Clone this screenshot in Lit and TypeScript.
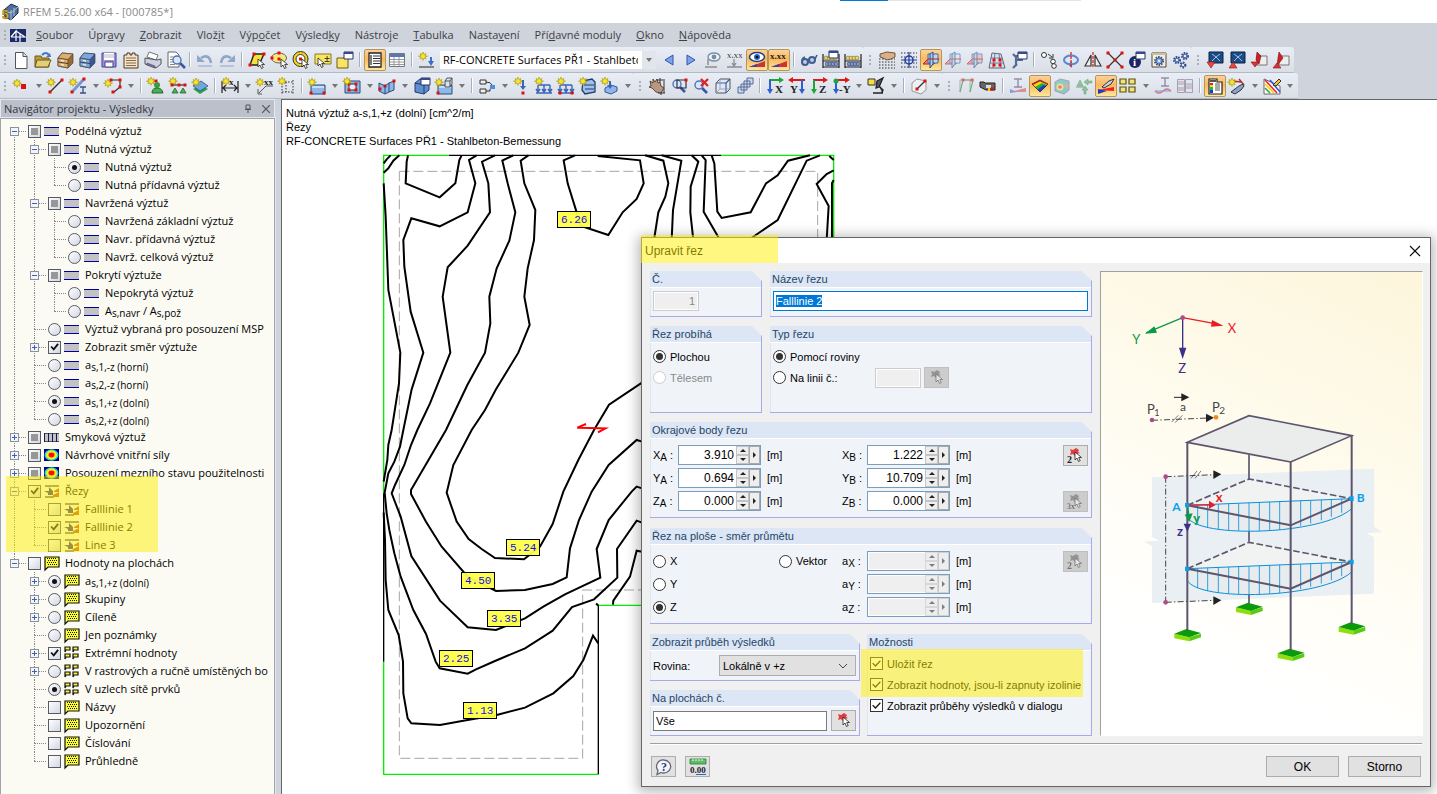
import { LitElement, html, svg, css, nothing } from "lit";
import { customElement, query } from "lit/decorators.js";
import { classMap } from "lit/directives/class-map.js";

/* ---------- drawing helpers ---------- */
const p = (d: string, fill = "none", stroke = "none", w = 1) =>
  svg`<path d=${d} fill=${fill} stroke=${stroke} stroke-width=${w}></path>`;
const star = (x = 4, y = 4) =>
  p(`M${x} ${y - 4}l1 2.500 2-1-1 2 2.500 .7-2.500 .7 1 2-2-1-1 2.500-1-2.500-2 1 1-2-2.500-.7 2.500-.7-1-2 2 1z`, "#f5e636", "#a89200", 0.6);
const dots = (...pts: number[][]) => pts.map(([x, y]) => p(`M${x - 1.5} ${y - 1.5}h3v3h-3z`, "#e01010"));
const cursor = (x: number, y: number) =>
  p(`M${x} ${y}v8l2-2 1.500 3.500 1.700-.8-1.500-3.200h2.800z`, "#fff", "#222", 0.8);
const glass = (x: number, y: number) => svg`
  ${p(`M${x + 3} ${y + 3}l5 5`, "none", "#3a57a8", 2.6)}
  <circle cx=${x} cy=${y} r="4" fill="#d8e8fb" stroke="#5473b8" stroke-width="1.4"></circle>`;
const glyph = (x: number, y: number, size: number, t: string, fill = "#222") =>
  svg`<text x=${x} y=${y} font-size=${size} fill=${fill} font-family="Liberation Serif, serif" font-weight="bold">${t}</text>`;
const axis = (t: string, h: string, v: string, flip = false) => svg`
  ${p(flip ? "M4 3h13" : "M3 3h12", "none", h, 2)}
  ${p(flip ? "M0 3l5-3v6z" : "M18 3l-5-3v6z", h)}
  ${p(flip ? "M14 3v10" : "M4 3v10", "none", v, 2)}
  ${p(flip ? "M14 17l-3-5h6z" : "M4 17l-3-5h6z", v)}
  ${glyph(flip ? 2 : t.length > 1 ? 7 : 9, 16, 11, t)}`;
const cabinet = (a: string, b: string) => svg`
  ${p("M2 7l4-5 11 1v9l-5 5-10-2z", b, "#444", 0.7)}${p("M2 7l10 1.500v8.500l-10-2z", a, "#444", 0.7)}
  ${p("M2 7l4-5 11 1-5 5.500z", a, "#444", 0.7)}${p("M2 11l10 1.500", "none", "#222", 0.8)}${p("M5 9.500l3 .6M5 13.500l3 .6", "none", "#fff6d0", 1.200)}`;
const planes = (a: string) => svg`
  ${p("M1 13l5-5h11l-5 5z", "#e98080", "#b02020", 1)}${p("M6 3h10v9h-10z", a, "#3a6ea5", 1)}
  ${p("M8 3l3-2v12l-3 4z", "#a9cdf0", "#2b4f86", 1)}${p("M6 8h10", "none", "#b02020", 1)}`;
const slab = svg`${p("M3 8h14v9h-14z", "#8db8ea", "#2c4a78")}${p("M4 9h12v2h-12z", "#c6defa")}`;
const loads = p("M1 16h16M3 8v7M9 8v7M15 8v7M3 8h12M3 12h0M1 12l2 3 2-3M7 12l2 3 2-3M13 12l2 3 2-3", "none", "#3b66b8", 1.4);
const win = (x: number, y: number) => svg`${p(`M${x} ${y}h9v7h-9z`, "#fff", "#2a3560")}${p(`M${x} ${y}h9v2h-9z`, "#39498c")}`;
const cube = (a: string, b: string) => svg`${p("M2 6l4-4h10v10l-4 4H2z", a, "#555")}${p("M2 6h10v10M12 6l4-4", "none", b, 1.2)}${p("M6 2v10h10M6 12l-4 4", "none", "#8b97b4", 0.8)}`;
const abacus = svg`${p("M1 3v14M17 3v14M1 10h16M1 16h16", "none", "#222", 1.2)}
  ${[4, 7, 10, 13].map((x) => svg`<circle cx=${x} cy="7" r="1.900" fill="#e5d67a" stroke="#6a5a10" stroke-width=".5"></circle><circle cx=${x + 1} cy="13" r="1.900" fill="#7f9ae0" stroke="#223" stroke-width=".5"></circle>`)}`;
const gear = (x: number, y: number, r: number) => svg`<circle cx=${x} cy=${y} r=${r} fill="#b9cdf0" stroke="#33508f" stroke-width="2" stroke-dasharray="1.500 1"></circle><circle cx=${x} cy=${y} r=${r - 1} fill="#8fabdf" stroke="#33508f" stroke-width=".8"></circle><circle cx=${x} cy=${y} r="1" fill="#fff"></circle>`;
const dash = (d: string) => svg`<path d=${d} fill="none" stroke="#333" stroke-dasharray="1.500 1.500"></path>`;
const picker = svg`${p("M3 2l3 1 3-2 3 2-1 2 2 1-3 1-2 2-2-2-3 1 1-3z", "#e23b3b")}${cursor(8, 5)}`;
const rainbow = svg`${p("M1 7l8-4 8 4-8 8z", "#e22")}${p("M2 8l7-3.500 7 3-7 7.500z", "#f6d90a")}${p("M4 10l7-4 5 2-7 7z", "#1fb436")}${p("M6.500 12.500l6-4.500 3 1-6.500 6z", "#2038d8")}${p("M1 7l8-4 8 4-8 8z", "none", "#222", 0.7)}`;
const quad = svg`${[[0, 2], [8, 2], [0, 9], [8, 9]].map(([x, y]) => p(`M${x + 1} ${y}h5v3h-4l-1 2z`, "#f7f03a", "#111", 1.2))}`;

const icons: Record<string, unknown> = {
  new: svg`${p("M3.500 1.500h8l3.500 4v12h-11.500z", "#fff", "#555")}${p("M11 1.500v4h4", "#dde", "#555")}`,
  open: svg`${p("M1 5h6l1 2h7v9H1z", "#b79b3c", "#6f5a12")}${p("M3 9h14l-3 7H1z", "#e2cf78", "#6f5a12")}${p("M8 4q4-4 7 0", "none", "#4a77c4", 2)}${p("M17 6h-5l4-4z", "#4a77c4")}`,
  box: cabinet("#e0ae6c", "#9c6a30"),
  boxBlue: cabinet("#7ea6e4", "#33599e"),
  save: svg`${p("M2 2h14v14h-14z", "#9a8fd8", "#4b4390")}${p("M4 2h10v7H4z", "#fff")}${p("M4 4h10M4 6h10", "none", "#bbb")}${p("M5 11h8v5H5z", "#fff", "#4b4390")}`,
  notes: svg`${p("M2 4h3v-2h3v2h2v-2h3v2h3v13H2z", "#f5e2c8", "#4a3a28")}${p("M4 7h10M4 9.500h10M4 12h10M4 14.500h10", "none", "#8a6b48")}`,
  print: svg`${p("M5 1l9 3-2 5-9-3z", "#fff", "#777")}${p("M1 7l12 2 4-1v5l-5 4-11-4z", "#cfd0e4", "#555")}${p("M3 12l8 3v2l-8-3z", "#77a", "#445", 0.6)}`,
  preview: svg`${p("M2 1h8l3 3v12H2z", "#fff", "#666")}${p("M4 6h6M4 8.500h5M4 11h5M4 13.500h5", "none", "#888")}${glass(11, 9)}`,
  undo: svg`${p("M5 7q8-5 10 5", "none", "#8ea6c9", 2.600)}${p("M1 4v7h8z", "#8ea6c9")}${p("M2 15h14", "none", "#b6c3d8", 2)}`,
  redo: svg`${p("M13 7q-8-5-10 5", "none", "#8ea6c9", 2.600)}${p("M17 4v7h-8z", "#8ea6c9")}${p("M2 15h14", "none", "#b6c3d8", 2)}`,
  selPara: svg`${p("M2 14l4-11h10l-5 11z", "#f6e13a", "#222", 1.4)}${dots([2, 14], [6, 3], [16, 3])}${cursor(10, 8)}`,
  selEllipse: svg`<ellipse cx="9" cy="7" rx="7.500" ry="5" fill="#f6e97a" stroke="#666"></ellipse>${dots([9, 2], [2, 7], [9, 8])}${cursor(11, 8)}`,
  selRing: svg`<circle cx="8.500" cy="8" r="6" fill="#fff" stroke="#f1d51c" stroke-width="3"></circle><circle cx="8.500" cy="8" r="7.500" fill="none" stroke="#333"></circle><circle cx="8.500" cy="8" r="4.500" fill="none" stroke="#333"></circle>${dots([8.5, 8])}${cursor(10, 8)}`,
  selAdd: svg`${p("M1 3h16v10H1z", "#f8e566", "#8a7a1a")}${cursor(4, 7)}${glyph(10, 11, 11, "±")}`,
  selWin: svg`${p("M1 7h11v10H1z", "#f8e566", "#6f5a12")}${win(8, 1)}`,
  list: svg`${p("M3 2h12v14H3z", "#fff", "#222", 1.300)}${p("M7 5h7M7 7.500h7M7 10h7M7 12.500h7", "none", "#333")}${p("M5 4v10", "none", "#333", 1.300)}`,
  table: svg`${p("M1.500 2.500h15v13h-15z", "#fff", "#777")}${p("M2 3h14v3H2z", "#5a78b8")}${p("M2 8.500h14M2 11h14M2 13.500h14M6 6v9M11 6v9", "none", "#999")}`,
  load: svg`${star(5, 5)}${p("M13 6v6", "none", "#3b70c8", 2)}${p("M1 16h15", "none", "#444", 1.2)}${p("M13 15l-3-5h6z", "#3b70c8")}`,
  prev: p("M13 4v10l-8-5z", "#7fa2ec", "#2e57b0"),
  next: p("M5 4v10l8-5z", "#7fa2ec", "#2e57b0"),
  supportEye: svg`<ellipse cx="10" cy="6" rx="6" ry="4" fill="#fff" stroke="#357" stroke-width="1.4"></ellipse><circle cx="10" cy="6" r="2.400" fill="#357"></circle>${p("M4 8v6M1 16h12", "none", "#555", 1.500)}`,
  xxxOff: svg`${glyph(1, 7, 9, "x.xx")}${p("M8 8v6M1 16h15M6 12l2 3 2-3", "none", "#555", 1.300)}`,
  eye: svg`${p("M1 16l16-6v6z", "#c33")}${p("M1 16l8-3v3z", "#34b")}<ellipse cx="9" cy="6" rx="7.500" ry="4.500" fill="#fff" stroke="#1b3f86" stroke-width="1.500"></ellipse><circle cx="9" cy="6" r="3" fill="#2b62c4"></circle><circle cx="9" cy="6" r="1.300" fill="#000"></circle>`,
  xxx: svg`${p("M1 16l16-6v6z", "#c33")}${p("M1 16l8-3v3z", "#34b")}${glyph(0, 8, 9, "x.xx")}`,
  glasses: svg`<circle cx="5" cy="11" r="3" fill="#b9cdf0" stroke="#445c8c" stroke-width="2"></circle><circle cx="12" cy="9" r="3" fill="#b9cdf0" stroke="#445c8c" stroke-width="2"></circle>${p("M8 10l2-1M2 10q0-3 3-4M15 8l2-4", "none", "#445c8c", 1.600)}`,
  abacusWin: svg`${abacus}${win(7, 0)}`,
  abacus,
  handGrid: svg`${dash("M1 8h16M1 11h16M1 14h16M1 17h16")}${p("M2 3l7-2 8 1v4l-4 2-4 1-4-2-3-1z", "#d8b08a", "#54381c", 0.8)}`,
  grid: svg`${dash("M1 2h16M1 6h16M1 12h16M1 16h16")}<circle cx="9" cy="9" r="4" fill="#d7e2fa" stroke="#223c9a" stroke-width="1.500"></circle>${p("M9 1v16M1 9h16", "none", "#223c9a", 1.200)}`,
  plane1: planes("#bcd7f3"),
  plane2: planes("#dfe8f3"),
  plane3: planes("#f0b0a8"),
  gridBox: svg`${p("M4 2l9 1 4 14H1z", "#cfe3f7", "#667")}${p("M3 7h11M2 12h14M7 2l-2 15M11 3l2 14", "none", "#667", 0.8)}${dots([6, 9], [12, 9], [6, 14], [12, 14])}`,
  clampWin: svg`${p("M3 17l4-4M6 15V4M6 9h7M3 3l3 3 4-3", "none", "#556a94", 2.200)}${win(8, 1)}`,
  copy: svg`<circle cx="4" cy="4" r="2.500" fill="#fff" stroke="#333"></circle><circle cx="13" cy="10.500" r="2.300" fill="#fff" stroke="#333"></circle><circle cx="14" cy="15" r="2.300" fill="#fff" stroke="#333"></circle>${p("M8 3l4 3M9 7h4V3", "none", "#333")}`,
  rotate: svg`<ellipse cx="9" cy="9" rx="7" ry="4.500" fill="none" stroke="#5b86d0" stroke-width="2"></ellipse>${p("M6 13.500l4-3.500v7z", "#5b86d0")}<path d="M9 1v16" stroke="#d22" stroke-width="1.300" stroke-dasharray="3 1"></path>`,
  mirror: svg`${p("M1 15l6-11v11zM17 15l-6-11v11z", "#eee", "#333", 1.200)}<path d="M9 1v16" stroke="#d22" stroke-width="1.300" stroke-dasharray="3 1"></path>`,
  cross: svg`${p("M2 2l14 14M16 2l-14 14", "none", "#333", 1.200)}${dots([2, 2], [16, 2], [9, 9], [2, 16], [16, 16])}`,
  info: svg`<circle cx="7" cy="11" r="6" fill="#1a2466"></circle>${glyph(5, 15, 11, "i", "#fff")}${win(8, 1)}`,
  gearBox: svg`${p("M2 2h14v14H2z", "#f7f0d8", "#544")}${p("M2 2h14v2H2z", "#cbbfa0")}${gear(9, 10, 4)}`,
  gears: svg`${gear(5, 9, 3)}${gear(13, 5, 3)}${gear(11, 14, 2.4)}`,
  dlDown: svg`${p("M3 1h14v11H3z", "#1c4c86", "#0a2244")}${p("M6 3l4 3 4-3M6 10l4-4 4 4", "none", "#bfe0ff", 0.8)}${p("M1 11h8l-4 6z", "#e44", "#811", 0.6)}`,
  dlUp: svg`${p("M3 1h14v11H3z", "#1c4c86", "#0a2244")}${p("M6 3l4 3 4-3M6 10l4-4 4 4", "none", "#bfe0ff", 0.8)}${p("M1 17h8l-4-6z", "#e44", "#811", 0.6)}`,
  fileDown: svg`${p("M7 5h10v9H7z", "#eee", "#777")}${p("M7 1l4 4-2 8-3-4z", "#c22", "#711", 0.600)}${p("M1 11h8l-4 5z", "#d33", "#811", 0.6)}`,
  fileUp: svg`${p("M7 5h10v9H7z", "#eee", "#777")}${p("M7 1l4 6-6 8 1-8z", "#c22", "#711", 0.600)}${p("M1 17h8l-4-5z", "#d33", "#811", 0.6)}`,

  node: svg`${star(5, 6)}${p("M9 7h5v5H9z", "#e01010")}`,
  line: svg`${star(4, 5)}${p("M3 15L15 3", "none", "#333", 1.500)}${dots([3, 15], [15, 3])}`,
  member: svg`${p("M3 15L15 2", "none", "#7797d0", 3)}${star(4, 5)}${dots([3, 15], [15, 2])}${p("M11 10h6M11 16h6M14 10v6", "none", "#33508f", 1.300)}`,
  poly: svg`${star(4, 6)}${p("M7 3h9v7l-6 5", "none", "#333", 1.200)}${dots([7, 3], [16, 3], [16, 10], [9, 15])}`,
  support: svg`${star(4, 4)}${dots([9, 4])}<circle cx="10" cy="8" r="3" fill="#3b9a46"></circle>${p("M5 16q0-5 5-5t6 5z", "#4cae57", "#1e6a28")}`,
  hinge: svg`${star(4, 4)}${p("M3 8h13", "none", "#333", 1.200)}${dots([3, 8], [10, 8], [16, 8])}${p("M3 16l3-5 3 5zM11 16l3-5 3 5z", "#4cae57", "#1e6a28", 0.8)}`,
  surf: svg`${p("M2 12l7 5 8-5-7-4z", "#2fa045")}${p("M2 9l7 5 8-5-7-5z", "#6ea6e6", "#27528f", 0.8)}${star(5, 5)}`,
  dim: svg`${p("M1 4v12M17 4v12M2 11h14M5 8l-3 3 3 3M13 8l3 3-3 3", "none", "#222", 1.200)}${star(5, 4)}${glyph(8, 8, 9, "x")}`,
  dimxx: svg`${p("M17 9h-7l-7 7M2 12v5h4", "none", "#555")}${star(4, 5)}${glyph(8, 8, 9, "xx")}`,
  dottedBox: svg`${dash("M4 5h12M4 15h12M4 3v14M15 3v14M8 5v10")}${star(4, 4)}`,
  slabNew: svg`${slab}${star(4, 5)}${dots([3, 16], [16, 16])}`,
  opening: svg`${p("M2 4h15v12H2z", "#8db8ea", "#2c4a78")}${p("M6 7h7v6H6z", "#eef", "#333")}${dots([6, 7], [13, 7], [6, 13], [13, 13])}${star(4, 4)}`,
  curved: svg`${p("M1 6l6 3 4-3 5-2v9l-5 2-4 2-6-3z", "#8db8ea", "#2c4a78")}${dots([2, 12], [16, 4], [7, 9])}${p("M7 9v8M11 6v9", "none", "#2c4a78")}`,
  solid: svg`${p("M2 6l5-4 9 2v9l-5 4-9-2z", "#5f8fd0", "#223c6a")}${p("M2 6l9 2v9M11 8l5-4", "none", "#223c6a")}${win(8, 1)}`,
  solidNew: svg`${slab}${p("M10 4h5v6h-5zM10 4l2-3h5l-2 3M17 1v6l-2 3", "#d6e2f2", "#333", 0.8)}${star(4, 5)}${dots([3, 16])}`,
  flow: svg`${p("M2 3h6v4H2zM2 12h6v4H2z", "#eee", "#333")}${p("M12 8h5v4h-5z", "#4f8fe0")}${p("M8 5q5 0 6 3M8 14h4v-2", "none", "#333")}`,
  nodeLoad: svg`${star(5, 4)}${p("M10 3v8", "none", "#3b66b8", 2)}${p("M10 13l-3-4h6z", "#3b66b8")}${dots([10, 16])}`,
  lineLoad: svg`${loads}${star(4, 4)}`,
  lineLoad2: svg`${loads}${star(4, 4)}${dots([3, 16], [15, 16])}`,
  solidLoad: svg`${p("M4 4l9-2 3 3v10l-10 2-3-4z", "#9fc0ea", "#223c6a", 1.300)}${p("M5 8h10M6 12h9", "none", "#223c6a")}${star(4, 4)}`,
  freeLoad: svg`${p("M4 11l6-3 6 2v4l-6 3-6-2z", "#8fb6ea", "#33599e")}${p("M9 4v6", "none", "#3b66b8", 2)}${p("M9 12l-3-4h6z", "#3b66b8")}${star(4, 4)}`,
  hand: svg`${p("M9 3h8M12 1v4M10 16h7M16 4v12M13 14v4", "none", "#333")}${p("M2 4l3 2 0-4 2 3 2-3 1 4 2-1 1 4 3 2-3 5-5-1-4-4-3-1 2-1z", "#b89880", "#3d2c1c", 0.8)}`,
  zoomWin: svg`${glass(7, 7)}${p("M7 3h9v8H7z", "none", "#333", 1.200)}${dots([16, 3])}`,
  zoomX: svg`${glass(7, 8)}${p("M9 2l7 7M16 2l-7 7", "none", "#d22", 2.200)}`,
  cubeWire: cube("#dfe7f5", "#445c9c"),
  cubes: svg`${p("M2 10h6v6H2zM5 7h6v6H5zM8 4h6v6H8zM11 1h6v6h-6z", "#cdd8ee", "#556a94")}`,
  axX: axis("X", "#1ea53a", "#2f5fd0"),
  axY: axis("Y", "#e01818", "#2f5fd0", true),
  axZ: axis("Z", "#e01818", "#1ea53a"),
  axMy: svg`${axis("-Y", "#e01818", "#2f5fd0")}<circle cx="4" cy="4" r="2.500" fill="#1ea53a"></circle>`,
  microscope: svg`${p("M1 2h7v6H1z", "#f6e13a", "#333")}${p("M10 4l6-3-4 9-3 1zM6 16h10M12 9l4 4-1 3", "#556", "#222", 1.300)}`,
  cubeRed: svg`${p("M2 6l5-4 9 2v9l-5 4-9-3z", "#eef0f4", "#999")}${p("M7 12l8-8", "none", "#333", 1.200)}${dots([7, 12], [15, 4])}`,
  deform: svg`${p("M3 15V3h10v12", "none", "#888")}${p("M3 15l3-12h10l-3 12", "none", "#2c8a3c", 1.200)}${dots([6, 3], [15, 3])}`,
  video: svg`${p("M1 5h4l1 1h10v7h-9l-6-3z", "#666", "#222")}${p("M7 8h5v3H7z", "#ddd")}${dots([13, 12])}${p("M9 11h2v3H9z", "#fc0")}`,
  forces: svg`${p("M5 2h8M9 2v8M5 10h8", "none", "#557", 1.400)}${p("M1 15h16l0-4z", "#d55")}${p("M1 12v4l7-1z", "#56c")}`,
  rainbow,
  cubeColor: svg`${p("M2 5l5-3 9 2v9l-5 4-9-3z", "#58b6ae", "#778")}<circle cx="7" cy="10" r="3.500" fill="#f1e34a"></circle><circle cx="7" cy="10" r="1.800" fill="#e33"></circle><circle cx="13.500" cy="9" r="1.800" fill="#e85"></circle>`,
  reactions: svg`${p("M2 9l3-6 3 6zM9 5l4-3v2h4v2h-4v2zM9 17v-4H7l3-4 3 4h-2v4z", "#58b062", "#2d7a38", 0.6)}${p("M1 10h8", "none", "#2d7a38")}`,
  section: svg`${p("M1 13l16-3v4z", "#e22")}${p("M1 12v5l9-3z", "#2436c8")}${p("M5 10l7-6 5-2-3 5-7 4z", "#c9d6ea", "#333")}`,
  quads: svg`${[[1, 2], [10, 2], [1, 10], [10, 10]].map(([x, y]) => p(`M${x} ${y}h6v5h-6z`, "#f3e476", "#5a5014", 1.200))}`,
  beamWave: svg`${p("M7 1h8M11 1v8M7 9h8", "none", "#557", 1.400)}${p("M1 14q4 4 8 0t8 0", "none", "#c33", 1.300)}${p("M1 14h16", "none", "#46c")}`,
  wavePanels: svg`${p("M1.500 2.500h7v13h-7zM9.500 2.500h7v13h-7z", "#dfe4f2", "#778")}${p("M2 7h14M2 11h14", "none", "#778")}${p("M2 5h6M10 9h6M2 13h6", "none", "#c66")}`,
  panel: svg`${p("M3 2h8v3h5v12H3z", "#fff", "#222", 1.200)}${p("M4 3h6v2H4z", "#555")}${p("M4 6h3v2H4z", "#e22")}${p("M4 8h3v2H4z", "#fd0")}${p("M4 10h3v3H4z", "#2b4")}${p("M4 13h3v3H4z", "#23d")}${p("M9 7h5M9 9h5M9 11h5M9 13h5", "none", "#555")}`,
  knife: svg`${p("M5 4l8 1M11 2l5 6", "none", "#a33", 1.500)}${star(4, 5)}${p("M3 15l8-6 4-2 1 2-3 4-6 4z", "#8aa4cc", "#333")}`,
  hatch: svg`${p("M1 2v15h16V9z", "#fff", "#666")}${p("M2 3l12 13", "none", "#e22", 1.600)}${p("M2 7l9 9", "none", "#fc0", 1.600)}${p("M2 11l5 5", "none", "#2a4", 1.600)}${p("M7 3l10 12", "none", "#35d", 1.600)}${p("M10 8l6-6 2 2-5 5z", "#f1c232", "#333")}`,

  pick: picker,
  pick2: svg`${picker}${glyph(0, 16, 10, "2")}`,
  pick3: svg`${picker}${glyph(0, 16, 8, "3x")}`,
  help: svg`${p("M9 2a7 6.500 0 1 1-3 12.500l-4 2 1-4A6.500 6.500 0 0 1 9 2z", "#f4f6fb", "#667", 1.300)}${glyph(6, 13, 12, "?", "#223c8a")}`,
  units: svg`${p("M1 1h16v5H1z", "#5cc060", "#2d7a38", 0.800)}${p("M4 1v2M7 1v2M10 1v2M13 1v2", "none", "#fff")}${glyph(1, 15, 9, "0.00", "#223")}${p("M7 16.500h10", "none", "#36c")}`,

  rebar: svg`${p("M0 4h15v9H0z", "#c3c3c3")}${p("M0 4.500h15M0 12.500h15", "none", "#0000a0", 1)}`,
  shear: svg`${p("M0 4h15v9H0z", "#c3c3c3")}${p("M0 4.500h15M0 12.500h15", "none", "#555")}${p("M0.500 4v9M4.500 4v9M8.500 4v9M12.500 4v9", "none", "#16165a", 1)}`,
  iso: svg`${p("M0 2h15v12H0z", "#000080")}<ellipse cx="7.500" cy="8" rx="7" ry="5.800" fill="#22d8e8"></ellipse><ellipse cx="7.500" cy="8" rx="5.500" ry="4.400" fill="#ffee00"></ellipse><ellipse cx="7.500" cy="8" rx="3" ry="2.400" fill="#f01010"></ellipse>`,
  cut: svg`${p("M1 2h14v2H1z", "#807a78")}${p("M1 13h9v2H1z", "#807a78")}${p("M0 8h5V4l4 4v4H4v-2z", "#35357e")}${p("M10 8l5-3v4h-5zM9 12l6-3v5h-6z", "#c0521c")}`,
  balloon: svg`${p("M1 2h14v10H4l-3 3z", "#fdfd33", "#111", 1.200)}${[4, 6, 8, 10].map((y, k) => svg`<path d=${`M${3 + (k % 2)} ${y - 0.5}h10`} stroke="#111" stroke-dasharray="1 1"></path>`)}`,
  quad,
};
const icon = (name: string, size = 18) =>
  html`<svg class="icon" width=${size} height=${size} viewBox=${`0 0 ${size} ${size}`} aria-hidden="true">${icons[name]}</svg>`;

/* ---------- data ---------- */
// Suffixes: "*" pressed, ">" has a drop-down, "~" dimmed; "|" is a separator.
const mainBars = [
  "new open box boxBlue save notes print preview | undo redo | selPara selEllipse selRing selAdd selWin | list* table | load COMBO prev next supportEye~ xxxOff~ eye* xxx* | glasses abacusWin abacus",
  "handGrid grid plane1* plane2~ plane3~ gridBox clampWin | copy rotate mirror cross info gearBox gears",
  "dlDown dlUp fileDown fileUp",
];
const editBars = [
  "node> line member> poly> | support hinge surf | dim> dimxx dottedBox | slabNew> opening> curved> solid solidNew> | flow> nodeLoad lineLoad lineLoad2 solidLoad freeLoad>",
  "hand zoomWin zoomX cubeWire cubes | axX axY axZ axMy> microscope> | cubeRed>",
  "deform~ video | forces~ rainbow* cubeColor~ reactions~ section* quads> beamWave~ wavePanels~ | panel* knife> hatch>",
];
const menus: [string, string, string][] = [
  ["", "S", "oubor"], ["Úpr", "a", "vy"], ["", "Z", "obrazit"], ["Vlož", "i", "t"], ["Výp", "o", "čet"], ["Výsled", "k", "y"],
  ["Nástro", "j", "e"], ["", "T", "abulka"], ["Nasta", "v", "ení"], ["Pří", "d", "avné moduly"], ["", "O", "kno"], ["", "N", "ápověda"],
];

type Mark = "box" | "mixed" | "on" | "radio" | "dot";
interface Node { d: number; m: Mark; i: string; t: unknown; x?: "+" | "-"; lit?: boolean }
const sub = (a: string, b: string) => html`${a}<sub>${b}</sub>`;
const n = (d: number, m: Mark, i: string, t: unknown, x?: "+" | "-", lit = false): Node => ({ d, m, i, t, x, lit });
const tree: Node[] = [
  n(0, "mixed", "rebar", "Podélná výztuž", "-"),
  n(1, "mixed", "rebar", "Nutná výztuž", "-"),
  n(2, "dot", "rebar", "Nutná výztuž"),
  n(2, "radio", "rebar", "Nutná přídavná výztuž"),
  n(1, "mixed", "rebar", "Navržená výztuž", "-"),
  n(2, "radio", "rebar", "Navržená základní výztuž"),
  n(2, "radio", "rebar", "Navr. přídavná výztuž"),
  n(2, "radio", "rebar", "Navrž. celková výztuž"),
  n(1, "mixed", "rebar", "Pokrytí výztuže", "-"),
  n(2, "radio", "rebar", "Nepokrytá výztuž"),
  n(2, "radio", "rebar", html`A<sub>s,navr</sub> / A<sub>s,pož</sub>`),
  n(1, "radio", "rebar", "Výztuž vybraná pro posouzení MSP"),
  n(1, "on", "rebar", "Zobrazit směr výztuže", "+"),
  n(1, "radio", "rebar", sub("a", "s,1,-z (horní)")),
  n(1, "radio", "rebar", sub("a", "s,2,-z (horní)")),
  n(1, "dot", "rebar", sub("a", "s,1,+z (dolní)")),
  n(1, "radio", "rebar", sub("a", "s,2,+z (dolní)")),
  n(0, "mixed", "shear", "Smyková výztuž", "+"),
  n(0, "mixed", "iso", "Návrhové vnitřní síly", "+"),
  n(0, "mixed", "iso", "Posouzení mezního stavu použitelnosti", "+"),
  n(0, "on", "cut", "Řezy", "-", true),
  n(1, "box", "cut", "Falllinie 1"),
  n(1, "on", "cut", "Falllinie 2"),
  n(1, "box", "cut", "Line 3"),
  n(0, "box", "balloon", "Hodnoty na plochách", "-"),
  n(1, "dot", "balloon", sub("a", "s,1,+z (dolní)"), "+"),
  n(1, "radio", "balloon", "Skupiny", "+"),
  n(1, "radio", "balloon", "Cíleně", "+"),
  n(1, "radio", "balloon", "Jen poznámky"),
  n(1, "on", "quad", "Extrémní hodnoty", "+"),
  n(1, "radio", "quad", "V rastrových a ručně umístěných bo", "+"),
  n(1, "dot", "quad", "V uzlech sítě prvků"),
  n(1, "box", "balloon", "Názvy"),
  n(1, "box", "balloon", "Upozornění"),
  n(1, "box", "balloon", "Číslování"),
  n(1, "box", "balloon", "Průhledně"),
];
const hasNext = (row: number, depth: number) => {
  for (let k = row + 1; k < tree.length; k++) {
    if (tree[k].d < depth) return false;
    if (tree[k].d === depth) return true;
  }
  return false;
};

// Contour lines in model units, three units to a pixel.
const contours = [
  "41,190 50,178 62,166", "41,218 55,205 70,182 88,166",
  "114,166 110,185 107,250 209,292 256,250 268,180 275,166",
  "320,166 297,180 316,250 293,337 209,379 124,355 100,420 103,500 122,635 160,758 125,868 100,990 90,1040 73,1085 55,1120 44,1178 50,1240 58,1290 73,1360 92,1430 130,1530 168,1602 197,1685 209,1705 293,1721 318,1708 375,1683 465,1645 525,1607 548,1592 606,1521 672,1498 742,1433 741,1347 800,1262 816,1268",
  "375,166 336,185 355,250 360,337 293,437 233,502 218,590 241,758 180,910 142,990 123,1035 103,1095 75,1155 65,1180 92,1250 124,1368 210,1502 293,1582 378,1590 465,1555 520,1520 585,1483 691,1433 680,1347 716,1260 785,1175 800,1160 816,1165",
  "430,166 397,182 413,250 436,337 418,422 380,505 358,590 361,670 345,758 292,855 228,990 123,1170 123,1182 168,1265 215,1340 293,1430 378,1473 465,1470 548,1452 590,1432 600,1345 627,1260 665,1175 716,1095 800,1020 816,1025",
  "475,166 452,182 463,250 496,330 492,420 473,505 463,590 479,675 445,758 378,868 345,930 305,990 250,1095 230,1178 260,1265 296,1317 335,1347 375,1374 462,1378 510,1340 548,1272 580,1175 625,1080 672,990 717,914 816,848",
  "615,166 581,181 593,250 620,337 633,378 715,405 758,337 800,297 821,250 810,181 683,168",
  "825,166 880,182 895,250 886,290 865,337 852,420", "875,166 934,182 909,330 905,420",
  "965,166 985,185 962,260 961,337 970,420", "995,166 1007,180 1001,335 1050,420",
  "1025,166 1033,190 1042,335 1055,354 1142,337 1188,250 1223,226 1254,182 1320,166",
  "1350,166 1310,182 1223,360 1140,417", "1378,168 1391,180", "1391,211 1370,222 1340,252 1376,318 1370,420", "1391,240 1386,250 1386,420",
  "41,250 47,350 55,570 91,758 87,850 65,990 55,1035 52,1080 41,1145",
  "41,1238 45,1320 47,1440 55,1530 86,1605 99,1685 100,1780 113,1855 124,1870 210,1875 280,1862 380,1845 465,1823 550,1780 610,1728 640,1680 669,1607 685,1630",
  "816,1355 800,1352 780,1430 730,1502 729,1514", "678,1511 685,1516",
];
const tags: [number, number, string][] = [
  [557, 211, "6.26"], [506, 539, "5.24"], [461, 572, "4.50"], [487, 610, "3.35"], [439, 650, "2.25"], [463, 702, "1.13"],
];

const pad = (x: number, y: number) => svg`
  ${p(`M${x - 39} ${y}l45 11v12l-45-9z`, "#8fe00a")}${p(`M${x + 6} ${y + 11}l35-11v11l-35 12z`, "#55cc10")}
  ${p(`M${x - 39} ${y}l36-14 44 12-35 13z`, "#0a9a0a")}`;
const diagram = (y: number) => {
  const lines = [308, 338, 370, 401, 431, 462, 493, 524, 554, 586, 617, 647, 679, 709, 740];
  const drop = [60, 70, 76, 79, 82, 85, 85, 85, 84, 82, 75, 69, 61, 52, 41];
  return svg`
    ${p(`M277 ${y + 35}V${y}L770 ${y - 20}V${y + 10}C680 ${y + 90} 310 ${y + 100} 277 ${y + 35}z`, "#e8ecee", "#0a90d8", 3)}
    ${lines.map((x, k) => p(`M${x} ${y - (x - 277) * 0.04}V${y - (x - 277) * 0.04 + drop[k]}`, "none", "#0a90d8", 2.500))}
    ${p(`M277 ${y}L587 ${y + 60}L770 ${y - 20}`, "none", "#5c556d", 6)}
    <path d=${`M277 ${y}L462 ${y - 79}L770 ${y - 20}`} fill="none" stroke="#5c556d" stroke-width="5" stroke-dasharray="20 8"></path>`;
};

@customElement("app-root")
export class AppRoot extends LitElement {
  @query("#name") private nameField!: HTMLInputElement;

  static styles = css`
    :host { display: block; font: 11px/18px "Open Sans", "Noto Sans", sans-serif; color: #111; }
    * { box-sizing: border-box; }
    button, input, select { font: inherit; color: inherit; margin: 0; padding: 0; border-radius: 0; }
    .app { position: relative; height: 100vh; display: flex; flex-direction: column; overflow: hidden; background: #cfd3db; }
    .icon { display: block; flex: none; overflow: visible; }

    .title { position: relative; height: 23px; flex: none; display: flex; align-items: center; gap: 4px; padding-left: 1px; background: #fff; color: #8b8b8b; }
    .progress { position: absolute; top: 0; left: 840px; width: 241px; height: 1px; background: linear-gradient(90deg, #0078d7 48px, #e5e5e5 48px); }
    .menu { height: 24px; flex: none; display: flex; align-items: center; gap: 15px; background: #cfd3db; color: #3c3f48; }
    .menu a { color: inherit; text-decoration: none; }
    .brand { display: flex; align-items: center; margin-right: -5px; }
    .grip { flex: none; width: 10px; height: 14px; align-self: center; background: radial-gradient(circle, #a9afbd 1px, transparent 1px) center / 4px 4px repeat-y; }
    .grip.wide { width: 12px; }
    .bars { height: 26px; flex: none; display: flex; }
    .bar { display: flex; align-items: center; height: 26px; background: linear-gradient(#e9edf5, #dadee7); border-bottom: 1px solid #b4b9c6; border-radius: 0 3px 0 0; }
    .bar:last-child { padding-right: 2px; }
    .tool { width: 22px; height: 22px; flex: none; display: grid; place-items: center; border: 1px solid transparent; background: none; }
    .tool.on { border-color: #b39658; border-radius: 2px; background: linear-gradient(#fcd19a, #fbb85c 45%, #fde79a); }
    .dim { opacity: .6; }
    .drop { width: 13px; height: 22px; flex: none; display: grid; place-items: center; border: 0; background: none; }
    .drop::before, .pick-arrow::before { content: ""; border: 3px solid transparent; border-top: 4px solid #777; border-bottom: 0; }
    .sep { width: 8px; height: 15px; flex: none; background: linear-gradient(90deg, transparent 3px, #a8aebb 3px 4px, #fff 4px 5px, transparent 5px); }
    .case { display: grid; grid-template-columns: 1fr 14px; width: 216px; height: 18px; margin: 0 2px; background: #fff; color: #000; }
    .case select { grid-area: 1 / 1 / 2 / 3; min-width: 0; appearance: none; border: 0; background: none; padding: 0 18px 0 3px; font-size: 11px; line-height: 18px; }
    .pick-arrow { grid-area: 1 / 2; display: grid; place-items: center; background: #e2e5ec; pointer-events: none; }

    .main { flex: 1; min-height: 0; display: grid; grid-template-columns: 281px minmax(0, 1fr); }
    .nav { display: flex; flex-direction: column; min-width: 0; padding-right: 6px; }
    .nav h2 { display: flex; align-items: center; gap: 10px; height: 19px; flex: none; margin: 0; padding: 0 4px 0 3px; background: #bbc0cb; border: 1px solid #e4e8f0; font: inherit; color: #33363f; }
    .nav h2 span { flex: 1; }
    .tree { position: relative; flex: 1; margin: 0; padding: 3px 0 0; list-style: none; background: #fbfbf4; border: 1px solid #9ea3af; border-width: 1px 1px 0; outline: 1px solid #e4e8f0; overflow: hidden; }
    .node { position: relative; display: flex; align-items: center; height: 18px; padding-left: 3px; white-space: nowrap; }
    .rail { position: relative; width: 20px; height: 18px; flex: none; display: grid; place-items: center; }
    .rail.up::before, .rail.down::after { content: ""; position: absolute; left: 10px; width: 0; height: 9px; border-left: 1px dotted #888; }
    .rail.up::before { top: 0; }
    .rail.down::after { top: 9px; }
    .stub { position: absolute; left: 10px; top: 9px; width: 12px; border-top: 1px dotted #888; }
    .exp { position: relative; z-index: 1; width: 9px; height: 9px; border: 1px solid #8c909c; background: linear-gradient(#3a63b0, #3a63b0) center / 5px 1px no-repeat #f4f5fa; }
    .exp.plus { background: linear-gradient(#3a63b0, #3a63b0) center / 5px 1px no-repeat, linear-gradient(#3a63b0, #3a63b0) center / 1px 5px no-repeat #f4f5fa; }
    .node label { display: flex; align-items: center; padding-left: 4px; color: #000; }
    .node .icon { margin: 0 5px 0 3px; }
    sub { font-size: 10px; line-height: 1; vertical-align: -2px; }
    .mark { appearance: none; width: 13px; height: 13px; flex: none; display: grid; place-items: center; border: 1px solid #555b66; background: linear-gradient(135deg, #fff, #d3d6e2); }
    .mark[type="radio"] { border-radius: 50%; }
    .mark[type="radio"]:checked::before { content: ""; width: 5px; height: 5px; border-radius: 50%; background: #111; }
    .mark[type="checkbox"]:checked::before { content: ""; width: 9px; height: 9px; background: #111; clip-path: polygon(5% 50%, 20% 38%, 40% 62%, 82% 8%, 98% 22%, 42% 92%); }
    .mark:indeterminate[type="checkbox"]::before { content: ""; width: 7px; height: 7px; background: #979797; }
    .glow { position: absolute; z-index: 2; background: rgba(255, 240, 0, .5); pointer-events: none; }
    .glow.tree-glow { left: 5px; top: -6px; width: 152px; height: 76px; }

    .view { position: relative; min-width: 0; overflow: hidden; background: #fff; border-top: 1px solid #666; border-left: 1px solid #666; }
    .canvas { position: absolute; inset: 0; width: 100%; height: 100%; }
    .caption { position: relative; margin: 0; padding: 6px 4px; font: 11px/14px "Liberation Sans", Arial, sans-serif; color: #000; white-space: pre-line; }

    .dialog { position: absolute; left: 641px; top: 237px; width: 790px; border: 1px solid #666; background: #f0f0f0; box-shadow: 0 2px 12px 3px rgba(0, 0, 0, .28); font: 11px/16px "Liberation Sans", Arial, sans-serif; color: #000; }
    .dlg-title { position: relative; display: flex; align-items: center; justify-content: space-between; height: 25px; padding: 0 9px 0 3px; background: #fff; }
    .dlg-title h1 { margin: 0; font: 12px/18px "Liberation Sans", Arial, sans-serif; }
    .glow.title-glow { left: -1px; top: -3px; width: 137px; height: 28px; }
    .close { border: 0; background: none; display: grid; place-items: center; width: 12px; height: 12px; }
    .dlg-body { display: grid; grid-template-columns: minmax(0, 1fr) 323px; gap: 8px; padding: 8px 7px 7px 8px; }
    .form { display: flex; flex-direction: column; gap: 9px; min-width: 0; }
    .form .late { margin-top: 1px; }
    .two { display: grid; grid-template-columns: 112px minmax(0, 1fr); gap: 8px; }
    .last { display: grid; grid-template-columns: 210px minmax(0, 1fr); gap: 7px; }
    .stack { display: grid; gap: 9px; }
    fieldset { position: relative; display: block; min-width: 0; margin: 0; padding: 0; border: 1px solid #a8a8ea; border-width: 0 1px 1px 0; background: #f0f4f9; box-shadow: inset 1px 0 #dce6f4; clip-path: polygon(0 0, calc(100% - 10px) 0, 100% 10px, 100% 100%, 0 100%); }
    legend { float: left; width: 100%; height: 17px; padding: 0 2px; line-height: 17px; background: #dce6f4; border-bottom: 1px solid #fff; color: #1f4568; }
    .in { clear: both; padding: 3px 3px 5px; }
    .field { width: 100%; height: 20px; padding: 0 3px; border: 1px solid #7a7a7a; background: #fff; outline: 0; }
    .field:disabled { border-color: #ccc; background: #efefef; box-shadow: inset 0 0 0 1px #fff; color: #888; }
    .field.short { width: 46px; text-align: right; }
    .field.focus { border-color: #0078d7; padding: 0 2px; }
    .field::selection { background: #0078d7; color: #fff; }
    .opt { display: flex; align-items: center; gap: 4px; height: 21px; }
    .opt.off { color: #888; }
    .opt .mark { border-color: #333; background: #fff; }
    .opt .mark[type="radio"]:checked::before { width: 7px; height: 7px; background: #333; }
    .opt .mark[type="checkbox"]:checked::before { clip-path: polygon(2% 50%, 12% 42%, 38% 68%, 88% 14%, 98% 24%, 38% 88%); }
    .opt .mark:disabled { border-color: #ccc; }
    .opts { padding: 3px 3px 24px; }
    .on-line { display: flex; align-items: center; }
    .on-line .opt { width: 102px; }
    .on-line .sq { margin-left: 3px; }
    .sq { width: 25px; height: 21px; flex: none; display: grid; place-items: center; border: 1px solid #adadad; background: #e1e1e1; }
    .sq:disabled { border-color: #bfbfbf; background: #ccc; filter: grayscale(1); }
    .sq:disabled .icon { opacity: .5; }
    .coords { display: grid; grid-template-columns: 25px 106px minmax(0, 1fr) 25px 83px 25px 88px 25px; grid-auto-rows: 20px; align-items: center; row-gap: 3px; padding: 6px 3px; }
    .coords .a { grid-column: 1; }
    .coords .fa { grid-column: 2; }
    .coords .b { grid-column: 4; }
    .coords .fb { grid-column: 5; }
    .coords .u { grid-column: 6; padding-left: 6px; }
    .coords .k { grid-column: 8; height: 21px; align-self: start; }
    .coords label { white-space: nowrap; }
    .fa { display: flex; align-items: center; gap: 6px; }
    .coords .opt { height: 20px; }
    .vec { grid-column: 3; }
    .dir { grid-template-columns: 126px 0 minmax(0, 1fr) 25px 83px 25px 88px 25px; }
    .spin { display: grid; grid-template-columns: minmax(0, 1fr) 13px 11px; grid-template-rows: 9px 9px; width: 83px; height: 20px; border: 1px solid #7b9ebd; background: #fff; }
    .spin input { grid-row: 1 / 3; border: 0; background: none; outline: 0; text-align: right; padding-right: 2px; font-size: 12px; }
    .spin button { display: grid; place-items: center; border: 1px solid #c4c4c4; background: #eee; }
    .spin .nx { grid-area: 1 / 3 / 3 / 4; border-color: #aaa; }
    .spin button::before { content: ""; border: 3px solid transparent; border-top-width: 0; border-bottom: 3px solid #222; }
    .spin .dn::before { border: 3px solid transparent; border-top: 3px solid #222; border-bottom-width: 0; }
    .spin .nx::before { border: 3px solid transparent; border-left: 3px solid #222; border-right-width: 0; }
    .spin.off { background: #efefef; box-shadow: inset 0 0 0 1px #fff; }
    .spin.off button { opacity: .55; }
    .plane { display: flex; align-items: center; padding: 4px 3px; }
    .plane label { width: 66px; }
    .combo { flex: 1; display: grid; grid-template-columns: 1fr 18px; align-items: center; }
    .combo select { grid-area: 1 / 1 / 2 / 3; height: 21px; padding: 0 20px 0 3px; appearance: none; border: 1px solid #adadad; background: #e1e1e1; }
    .combo svg { grid-area: 1 / 2; pointer-events: none; }
    .areas { display: flex; align-items: center; gap: 4px; padding-bottom: 4px; }
    .areas .field { padding: 0 2px; }
    .checks { padding: 2px 3px 15px; }
    .glow.opt-glow { left: 219px; top: 411px; width: 222px; height: 48px; }
    .preview { display: block; border: 1px solid #a0a0a0; border-right-color: #fff; border-bottom-color: #fff; background: linear-gradient(25deg, #fff 20%, #fffdf4 45%, #fdf6dc 100%); }
    .preview svg { display: block; width: 100%; height: auto; }
    .foot { display: flex; align-items: center; gap: 9px; margin: 0 8px; padding: 12px 1px 9px; border-top: 1px solid #a0a0a0; box-shadow: inset 0 1px #fff; }
    .foot .push { height: 21px; width: 73px; border: 1px solid #adadad; background: #e1e1e1; font-size: 12px; }
    .foot .ok { margin-left: auto; }
  `;

  firstUpdated() {
    this.nameField.focus({ preventScroll: true });
    this.nameField.select();
  }

  private bar(spec: string, first: boolean) {
    return html`<div class="bar" role="toolbar">
      <span class=${classMap({ grip: true, wide: !first })}></span>
      ${spec.split(" ").map((raw) => {
        if (raw === "|") return html`<span class="sep"></span>`;
        if (raw === "COMBO")
          return html`<span class="case"><select aria-label="Zatěžovací stav"><option>RF-CONCRETE Surfaces PŘ1 - Stahlbeton-Bemessung</option></select><span class="pick-arrow"></span></span>`;
        const name = raw.replace(/[*>~]/, "");
        return html`<button class=${classMap({ tool: true, on: raw.endsWith("*"), dim: raw.endsWith("~") })} aria-label=${name}>${icon(name)}</button>${raw.endsWith(">")
          ? html`<button class="drop" aria-label=${name + " menu"}></button>` : nothing}`;
      })}
    </div>`;
  }

  private node(item: Node, row: number) {
    const rails = [];
    for (let k = 0; k < item.d; k++) {
      const on = hasNext(row, k);
      rails.push(html`<span class=${classMap({ rail: true, up: on, down: on })}></span>`);
    }
    const radio = item.m === "radio" || item.m === "dot";
    let parent = row;
    while (parent > 0 && tree[parent].d >= item.d) parent--;
    return html`<li class="node">
      ${rails}<span class=${classMap({ rail: true, up: row > 0, down: hasNext(row, item.d) })}>
        <span class="stub"></span>${item.x ? html`<span class=${classMap({ exp: true, plus: item.x === "+" })}></span>` : nothing}
      </span>
      <label>
        <input class="mark" type=${radio ? "radio" : "checkbox"} name=${"g" + parent + (item.i === "quad" ? "q" : "")}
          .checked=${item.m === "on" || item.m === "dot"} .indeterminate=${item.m === "mixed"} />
        ${icon(item.i, 16)}<span>${item.t}</span>
      </label>
      ${item.lit ? html`<span class="glow tree-glow"></span>` : nothing}
    </li>`;
  }

  private spin(id: string, value = "", off = false) {
    return html`<span class=${classMap({ spin: true, off })}>
      <input id=${id} type="text" .value=${value} ?disabled=${off} />
      <button class="up" aria-label="Zvýšit" ?disabled=${off}></button>
      <button class="nx" aria-label="Další" ?disabled=${off}></button>
      <button class="dn" aria-label="Snížit" ?disabled=${off}></button>
    </span>`;
  }

  private opt(type: string, name: string, text: string, checked = false, off = false) {
    return html`<label class=${classMap({ opt: true, off })}><input class="mark" type=${type} name=${name} .checked=${checked} ?disabled=${off} />${text}</label>`;
  }

  private drawing() {
    return html`<svg class="canvas" aria-hidden="true"><g transform="translate(-282 -100)">
      <g transform="translate(370 100) scale(.33333)" fill="none">
        <path d="M41 1180V166H237M1053 166H1391V420M41 1685V2023H685M685 1516H820" stroke="#00f000" stroke-width="4"></path>
        <path d="M237 166H1053M41 1180V1685M685 1516V2023" stroke="#000" stroke-width="4"></path>
        <path d="M88 214H1343V420M88 214V1975H638V1470H820" stroke="#a6a6a6" stroke-width="3" stroke-dasharray="30 12"></path>
        ${contours.map((c) => svg`<polyline points=${c} stroke="#000" stroke-width="6"></polyline>`)}
        <path d="M648 972L622 983L706 985L684 997" stroke="#f00" stroke-width="6"></path>
      </g>
      ${tags.map(([x, y, t]) => svg`<rect x=${x + 0.5} y=${y + 0.5} width="33" height="16" fill="#ffff46" fill-opacity=".95" stroke="#000"></rect>
        <text x=${x + 4} y=${y + 12} font-family="Liberation Mono, monospace" font-size="11" fill="#1010e0">${t}</text>`)}
    </g></svg>`;
  }

  private preview() {
    const t = (x: number, y: number, s: string, fill: string, size = 39, w = "normal") =>
      svg`<text x=${x} y=${y} fill=${fill} font-size=${size} font-weight=${w}>${s}</text>`;
    const dd = (d: string) => svg`<path d=${d} fill="none" stroke="#444" stroke-width="3" stroke-dasharray="18 7 4 7"></path>`;
    return html`<svg viewBox="18 36 963 1389" font-family="Lato, sans-serif" role="img" aria-label="Schéma řezu">
      ${p("M171 652L837 626V800L862 816L815 820L837 832V1001L171 1029V858L148 845L192 842L171 830z", "#e9eff2")}
      <g stroke-linecap="round">
        ${p("M263 173L155 218", "none", "#0a9a48", 4)}${p("M150 221l28-22 8 19z", "#0a9a48")}
        ${p("M263 173L360 191", "none", "#e81c24", 4)}${p("M385 197l-37 3 3-20z", "#e81c24")}
        ${p("M263 173V270", "none", "#3a2f8a", 4)}${p("M263 297l-11-34h22z", "#3a2f8a")}
      </g>
      <circle cx="263" cy="173" r="7" fill="#b04a88"></circle>
      ${t(398, 220, "X", "#e81c24")}${t(112, 252, "Y", "#0a9a48")}${t(250, 339, "Z", "#3a2f8a")}
      ${p("M237 412H262", "none", "#222", 3)}${p("M283 412l-24-12v24z", "#222")}
      ${t(255, 453, "a", "#444", 36)}${t(156, 461, "P", "#444")}${t(178, 467, "1", "#444", 27)}${t(351, 456, "P", "#444")}${t(373, 462, "2", "#444", 30)}
      ${dd("M171 481L340 474")}${p("M357 473l-24-12v26z", "#222")}${p("M230 486l20-20M240 488l22-22", "none", "#333", 2)}
      <circle cx="171" cy="480" r="7" fill="#b04a88"></circle><circle cx="363" cy="472" r="7" fill="#f08a1c"></circle>
      ${p("M277 547L462 467L770 527L587 606z", "#ebeded", "#5c556d", 5)}
      ${pad(462, 1042)}${p("M462 584V657M462 760V845M462 930V1030", "none", "#5c556d", 5)}
      ${p("M277 735L462 657L770 716L587 796z", "#f1f2f2")}${diagram(736)}
      ${p("M277 925L462 846L770 906L587 985z", "#f1f2f2")}${diagram(926)}
      ${pad(277, 1121)}${pad(587, 1180)}${pad(770, 1101)}
      ${p("M277 547V1112M587 606V1172M770 527V1092", "none", "#5c556d", 6)}
      ${dd("M212 650V1027")}${dd("M212 650L360 644")}${dd("M212 1027L360 1021")}
      ${p("M379 643l-24-12v26zM379 1021l-24-12v26z", "#222")}${p("M288 655l18-22M300 655l18-22", "none", "#333", 2)}
      <circle cx="212" cy="650" r="7" fill="#b04a88"></circle><circle cx="212" cy="1027" r="7" fill="#b04a88"></circle>
      ${p("M277 735H345", "none", "#e81c24", 4)}${p("M362 735l-20-13v24z", "#e81c24")}
      ${p("M277 735L281 765", "none", "#0a9a48", 5)}${p("M283 786l-14-22 24-4z", "#0a9a48")}${p("M277 815l-11-24h22z", "#3a2f8a")}
      ${p("M270 729h13v13h-13zM763 709h13v14h-13zM270 920h13v13h-13zM763 899h13v14h-13z", "#0aa0e8")}
      ${t(232, 752, "A", "#0aa0e8", 36, "bold")}${t(785, 726, "B", "#0aa0e8", 36, "bold")}
      ${t(362, 725, "x", "#e81c24", 39, "bold")}${t(295, 790, "y", "#0a9a48", 39, "bold")}${t(246, 827, "z", "#3a2f8a", 39, "bold")}
    </svg>`;
  }

  private dialog() {
    const axes: [string, string, string][] = [["X", "3.910", "1.222"], ["Y", "0.694", "10.709"], ["Z", "0.000", "0.000"]];
    return html`<section class="dialog" role="dialog" aria-label="Upravit řez">
      <header class="dlg-title">
        <h1>Upravit řez</h1>
        <button class="close" aria-label="Zavřít"><svg width="12" height="12" viewBox="0 0 12 12"><path d="M1 1l10 10M11 1L1 11" stroke="#111" stroke-width="1.200"></path></svg></button>
        <span class="glow title-glow"></span>
      </header>
      <div class="dlg-body">
        <div class="form">
          <div class="two">
            <fieldset><legend>Č.</legend><div class="in"><input class="field short" aria-label="Č." .value=${"1"} disabled /></div></fieldset>
            <fieldset><legend>Název řezu</legend><div class="in"><input id="name" class="field focus" aria-label="Název řezu" .value=${"Falllinie 2"} /></div></fieldset>
          </div>
          <div class="two">
            <fieldset><legend>Řez probíhá</legend><div class="in opts">
              ${this.opt("radio", "through", "Plochou", true)}${this.opt("radio", "through", "Tělesem", false, true)}
            </div></fieldset>
            <fieldset><legend>Typ řezu</legend><div class="in opts">
              ${this.opt("radio", "kind", "Pomocí roviny", true)}
              <div class="on-line">${this.opt("radio", "kind", "Na linii č.:")}<input class="field short" aria-label="Linie č." disabled /><button class="sq" disabled aria-label="Vybrat linii">${icon("pick")}</button></div>
            </div></fieldset>
          </div>
          <fieldset><legend>Okrajové body řezu</legend><div class="in coords">
            ${axes.map(([a, v, w], k) => html`
              <label class="a" for=${a + "a"}>${a}<sub>A</sub> :</label><span class="fa">${this.spin(a + "a", v)}<span>[m]</span></span>
              <label class="b" for=${a + "b"}>${a}<sub>B</sub> :</label><span class="fb">${this.spin(a + "b", w)}</span><span class="u">[m]</span>
              ${k === 0 ? html`<button class="sq k" aria-label="Vybrat 2 body">${icon("pick2")}</button>` : nothing}
              ${k === 2 ? html`<button class="sq k" disabled aria-label="Vybrat 3 body">${icon("pick3")}</button>` : nothing}`)}
          </div></fieldset>
          <fieldset class="late"><legend>Řez na ploše - směr průmětu</legend><div class="in coords dir">
            ${["X", "Y", "Z"].map((a, k) => html`
              <div class="a">${this.opt("radio", "dir", a, a === "Z")}</div>
              ${k === 0 ? html`<div class="vec">${this.opt("radio", "dir", "Vektor")}</div>` : nothing}
              <label class="b" for=${"v" + a}>a<sub>${a}</sub> :</label><span class="fb">${this.spin("v" + a, "", true)}</span><span class="u">[m]</span>
              ${k === 0 ? html`<button class="sq k" disabled aria-label="Vybrat směr">${icon("pick2")}</button>` : nothing}`)}
          </div></fieldset>
          <div class="last late">
            <div class="stack">
              <fieldset><legend>Zobrazit průběh výsledků</legend><div class="in plane">
                <label for="plane">Rovina:</label>
                <span class="combo"><select id="plane"><option>Lokálně v +z</option></select><svg width="10" height="6" viewBox="0 0 10 6"><path d="M1 1l4 4 4-4" fill="none" stroke="#444"></path></svg></span>
              </div></fieldset>
              <fieldset><legend>Na plochách č.</legend><div class="in areas">
                <input class="field" aria-label="Na plochách č." .value=${"Vše"} /><button class="sq" aria-label="Vybrat plochy">${icon("pick")}</button>
              </div></fieldset>
            </div>
            <fieldset><legend>Možnosti</legend><div class="in checks">
              ${this.opt("checkbox", "save", "Uložit řez", true)}
              ${this.opt("checkbox", "iso", "Zobrazit hodnoty, jsou-li zapnuty izolinie", true)}
              ${this.opt("checkbox", "show", "Zobrazit průběhy výsledků v dialogu", true)}
            </div></fieldset>
          </div>
        </div>
        <div class="preview">${this.preview()}</div>
      </div>
      <span class="glow opt-glow"></span>
      <footer class="foot">
        <button class="sq" aria-label="Nápověda">${icon("help")}</button>
        <button class="sq" aria-label="Jednotky">${icon("units")}</button>
        <button class="push ok">OK</button><button class="push">Storno</button>
      </footer>
    </section>`;
  }

  render() {
    return html`<div class="app">
      <header class="title">
        <svg width="18" height="18" viewBox="0 0 18 18" aria-hidden="true">${p("M3 7l7-6 7 3v6l-7 7-6-3z", "#4f6f96", "#1c2c44")}${p("M10 7v10M13 5v8M4 8l6 2 7-6", "none", "#aec3dc")}<text x="1" y="16" font-family="Liberation Sans" font-weight="bold" font-size="12" fill="#f2c21a" stroke="#5a4200" stroke-width=".4">5</text></svg>
        <span>RFEM 5.26.00 x64 - [000785*]</span><span class="progress"></span>
      </header>
      <nav class="menu">
        <span class="brand"><span class="grip"></span>
          <svg width="16" height="13" viewBox="0 0 16 13" aria-hidden="true">${p("M0 0h16v13H0z", "#1c2a6a")}${p("M1 8L6 2v10M6 2l9 6H1M10 5v8", "none", "#fff", 1.200)}</svg></span>
        ${menus.map(([a, b, c]) => html`<a href="#">${a}<u>${b}</u>${c}</a>`)}
      </nav>
      <div class="bars">${mainBars.map((b, k) => this.bar(b, k === 0))}</div>
      <div class="bars">${editBars.map((b, k) => this.bar(b, k === 0))}</div>
      <div class="main">
        <aside class="nav">
          <h2><span>Navigátor projektu - Výsledky</span>
            <svg width="8" height="9" viewBox="0 0 8 9"><path d="M2 1h4v4H2zM1 5.500h6M4 5v4" fill="none" stroke="#555"></path></svg>
            <svg width="8" height="8" viewBox="0 0 8 8"><path d="M0 0l8 8M8 0L0 8" stroke="#555" stroke-width="1.200"></path></svg></h2>
          <ul class="tree">${tree.map((item, k) => this.node(item, k))}</ul>
        </aside>
        <main class="view">
          ${this.drawing()}
          <p class="caption">Nutná výztuž a-s,1,+z (dolní) [cm^2/m]
Řezy
RF-CONCRETE Surfaces PŘ1 - Stahlbeton-Bemessung</p>
        </main>
      </div>
      ${this.dialog()}
    </div>`;
  }
}
